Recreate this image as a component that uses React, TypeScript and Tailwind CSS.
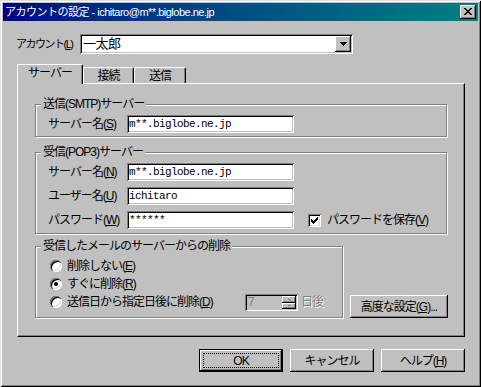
import React from "react";

function Px({ rows, color = "#000" }: { rows: string[]; color?: string }) {
  const w = rows[0].length;
  const h = rows.length;
  const rects: React.ReactNode[] = [];
  rows.forEach((r, y) =>
    r.split("").forEach((c, x) => {
      if (c === "X") rects.push(<rect key={`${x}-${y}`} x={x} y={y} width={1} height={1} fill={color} />);
    })
  );
  return (
    <svg width={w} height={h} viewBox={`0 0 ${w} ${h}`} shapeRendering="crispEdges">
      {rects}
    </svg>
  );
}

const closeX = ["XX....XX", ".XX..XX.", "..XXXX..", "...XX...", "..XXXX..", ".XX..XX.", "XX....XX"];
const downArrow = ["XXXXXXX", ".XXXXX.", "..XXX..", "...X..."];
const check = ["......X", ".....XX", "X...XXX", "XX.XXX.", "XXXXX..", ".XXX...", "..X...."];

function U({ c }: { c: string }) {
  return (
    <>
      (<span className="underline underline-offset-[1px]">{c}</span>)
    </>
  );
}

function Group({ label, className, children }: { label: string; className: string; children?: React.ReactNode }) {
  return (
    <div className={"relative border border-[#808080] shadow-[inset_1px_1px_#fff,1px_1px_#fff] " + className}>
      <span className="absolute left-[5px] top-[-8px] bg-[#c0c0c0] px-[2px] leading-[14px] whitespace-nowrap">{label}</span>
      {children}
    </div>
  );
}

function Field({ value, w }: { value: string; w: string }) {
  return (
    <div
      className={
        "h-[18px] bg-white pl-[2px] flex items-center shadow-[inset_1px_1px_#808080,inset_-1px_-1px_#fff,inset_2px_2px_#000,inset_-2px_-2px_#c0c0c0] font-['Liberation_Mono','Noto_Sans_CJK_JP',monospace] text-[11px] tracking-[-0.6px] " +
        w
      }
    >
      {value}
    </div>
  );
}

function Radio({ checked }: { checked?: boolean }) {
  return (
    <div className="w-[12px] h-[12px] rounded-full bg-white shadow-[inset_1px_1px_#808080,inset_2px_2px_#000,inset_-1px_-1px_#fff,inset_-2px_-2px_#dfdfdf] flex items-center justify-center shrink-0">
      {checked && <div className="w-[4px] h-[4px] rounded-full bg-black" />}
    </div>
  );
}

const raised = "shadow-[inset_-1px_-1px_#000,inset_1px_1px_#fff,inset_-2px_-2px_#808080]";

export default function App() {
  return (
    <div className="w-[481px] h-[387px] bg-[#c0c0c0] p-[3px] shadow-[inset_1px_1px_#dfdfdf,inset_-1px_-1px_#000,inset_2px_2px_#fff,inset_-2px_-2px_#808080] font-['Liberation_Sans','Noto_Sans_CJK_JP',sans-serif] text-[12px] leading-[12px] tracking-[-1px] text-black overflow-hidden">
      {/* title bar */}
      <div className="h-[18px] flex items-center bg-linear-to-r from-[#000080] to-[#008080] pl-[2px] pr-[2px]">
        <span className="text-white whitespace-nowrap leading-[14px] text-[11px] tracking-[-0.5px]">アカウントの設定 - ichitaro@m**.biglobe.ne.jp</span>
        <div className={"ml-auto w-[16px] h-[14px] bg-[#c0c0c0] flex items-center justify-center pb-[1px] " + raised}>
          <Px rows={closeX} />
        </div>
      </div>

      {/* account row */}
      <div className="mt-[13px] pl-[13px] flex items-center">
        <div className="w-[64px] whitespace-nowrap text-[11px] tracking-[-1.5px]">
          アカウント<U c="L" />
        </div>
        <div className="w-[273px] h-[20px] bg-white p-[2px] flex items-center shadow-[inset_1px_1px_#808080,inset_-1px_-1px_#fff,inset_2px_2px_#000,inset_-2px_-2px_#c0c0c0]">
          <span className="flex-1 pl-[1px] text-[13px] leading-[14px] tracking-[-0.5px]">一太郎</span>
          <div className={"w-[16px] h-[16px] bg-[#c0c0c0] flex items-center justify-center " + raised}>
            <Px rows={downArrow} />
          </div>
        </div>
      </div>

      {/* tabs */}
      <div className="mt-[10px] pl-[14px] flex items-end h-[19px]">
        <div className="relative z-10 w-[66px] h-[20px] mb-[-1px] bg-[#c0c0c0] border-l border-t border-white border-r border-r-black shadow-[inset_-1px_0_#808080] rounded-tl-[2px] rounded-tr-[2px] flex items-center justify-center pb-[4px]">
          サーバー
        </div>
        <div className="w-[51px] h-[16px] border-l border-t border-white border-r border-r-black shadow-[inset_-1px_0_#808080] rounded-tl-[2px] rounded-tr-[2px] flex items-center justify-center">
          接続
        </div>
        <div className="w-[52px] h-[16px] border-l border-t border-white border-r border-r-black shadow-[inset_-1px_0_#808080] rounded-tl-[2px] rounded-tr-[2px] flex items-center justify-center">
          送信
        </div>
      </div>

      {/* panel */}
      <div className="ml-[14px] w-[448px] h-[254px] border-l border-t border-white border-r border-b border-r-black border-b-black shadow-[inset_-1px_-1px_#808080] pl-[17px] pt-[20px]">
        <Group label="送信(SMTP)サーバー" className="w-[412px] h-[33px] pt-[10px] pl-[12px]">
          <div className="flex items-center">
            <div className="w-[79px] whitespace-nowrap">
              サーバー名<U c="S" />
            </div>
            <Field value="m**.biglobe.ne.jp" w="w-[167px]" />
          </div>
        </Group>

        <Group label="受信(POP3)サーバー" className="mt-[15px] w-[412px] h-[82px] pt-[10px] pl-[12px]">
          <div className="flex flex-col gap-[6px]">
            <div className="flex items-center">
              <div className="w-[79px] whitespace-nowrap">
                サーバー名<U c="N" />
              </div>
              <Field value="m**.biglobe.ne.jp" w="w-[167px]" />
            </div>
            <div className="flex items-center">
              <div className="w-[79px] whitespace-nowrap">
                ユーザー名<U c="U" />
              </div>
              <Field value="ichitaro" w="w-[167px]" />
            </div>
            <div className="flex items-center">
              <div className="w-[79px] whitespace-nowrap">
                パスワード<U c="W" />
              </div>
              <Field value="******" w="w-[167px]" />
              <div className="ml-[14px] w-[13px] h-[13px] bg-white flex items-center justify-center shadow-[inset_1px_1px_#808080,inset_-1px_-1px_#fff,inset_2px_2px_#000,inset_-2px_-2px_#dfdfdf]">
                <Px rows={check} />
              </div>
              <span className="ml-[6px] whitespace-nowrap">
                パスワードを保存<U c="V" />
              </span>
            </div>
          </div>
        </Group>

        <div className="mt-[12px] flex items-end">
          <Group label="受信したメールのサーバーからの削除" className="w-[308px] h-[72px] pt-[10px] pl-[14px]">
            <div className="flex flex-col">
              <div className="h-[18px] flex items-center">
                <Radio />
                <span className="ml-[5px] whitespace-nowrap">
                  削除しない<U c="E" />
                </span>
              </div>
              <div className="h-[18px] flex items-center">
                <Radio checked />
                <span className="ml-[5px] whitespace-nowrap">
                  すぐに削除<U c="R" />
                </span>
              </div>
              <div className="h-[18px] flex items-center">
                <Radio />
                <span className="ml-[5px] w-[178px] whitespace-nowrap">
                  送信日から指定日後に削除<U c="D" />
                </span>
                <div className="w-[53px] h-[17px] p-[2px] flex shadow-[inset_1px_1px_#808080,inset_-1px_-1px_#fff,inset_2px_2px_#000,inset_-2px_-2px_#c0c0c0]">
                  <span className="flex-1 pl-[1px] text-[#808080] leading-[13px]">7</span>
                  <div className="w-[14px] flex flex-col">
                    <div className={"h-[7px] bg-[#c0c0c0] flex items-center justify-center " + raised}>
                      <div className="w-[3px] h-[1px] bg-[#808080]" />
                    </div>
                    <div className={"h-[6px] bg-[#c0c0c0] flex items-center justify-center " + raised}>
                      <div className="w-[3px] h-[1px] bg-[#808080]" />
                    </div>
                  </div>
                </div>
                <span className="ml-[3px] text-[#808080] [text-shadow:1px_1px_0_#fff]">日後</span>
              </div>
            </div>
          </Group>
          <div className={"ml-[7px] w-[98px] h-[23px] flex items-center justify-center whitespace-nowrap " + raised}>
            高度な設定<U c="G" />...
          </div>
        </div>
      </div>

      {/* buttons */}
      <div className="mt-[12px] pr-[13px] flex justify-end gap-[7px]">
        <div className="w-[84px] h-[23px] border border-black p-[3px]">
          <div className="relative w-full h-full">
            <div className={"absolute -inset-[3px] " + raised} />
            <div className="relative h-full border border-dotted border-black flex items-center justify-center">OK</div>
          </div>
        </div>
        <div className={"w-[84px] h-[23px] flex items-center justify-center " + raised}>キャンセル</div>
        <div className={"w-[84px] h-[23px] flex items-center justify-center " + raised}>
          ヘルプ<U c="H" />
        </div>
      </div>
    </div>
  );
}
